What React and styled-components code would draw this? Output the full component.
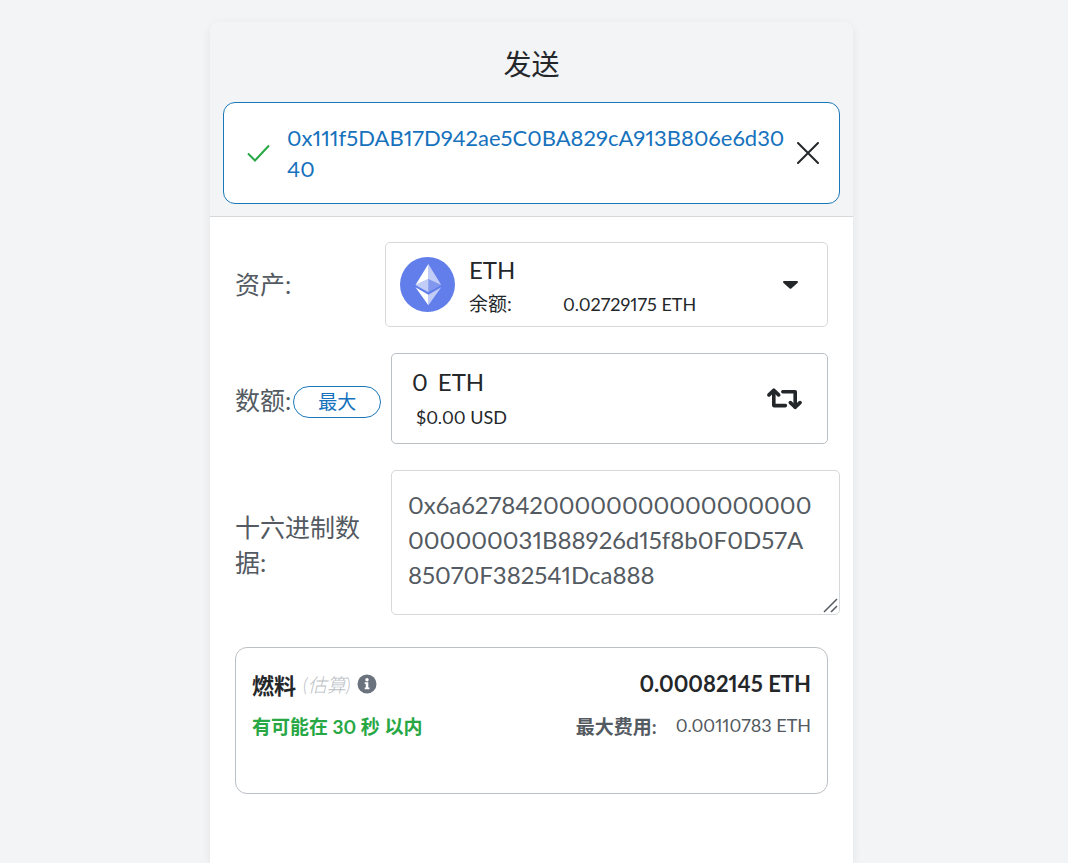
import { useState } from "react";
import styled, { createGlobalStyle } from "styled-components";

const GlobalStyle = createGlobalStyle`
  * {
    box-sizing: border-box;
  }
  body {
    margin: 0;
    background-color: #f2f4f6;
    color: #24272a;
    font-family: Lato, "Noto Sans CJK SC", sans-serif;
    font-variant-numeric: proportional-nums;
  }
  button, input, textarea {
    font-family: inherit;
    font-variant-numeric: inherit;
    color: inherit;
  }
`;

const Page = styled.div`
  display: flex;
  justify-content: center;
  min-height: 100vh;
  padding: 22px 5px 0 0;
`;

const Card = styled.main`
  width: 100%;
  max-width: 643px;
  background-color: #fff;
  border-radius: 10px 10px 0 0;
  box-shadow: 0 2px 10px rgba(0, 0, 0, 0.07);
`;

const Header = styled.header`
  padding: 22px 13px 12px;
  background-color: #f2f4f6;
  border-bottom: 1px solid #d6d9dc;
  border-radius: 10px 10px 0 0;
`;

const Title = styled.h1`
  margin: 0 0 18px;
  font-size: 28px;
  font-weight: 400;
  line-height: 40px;
  text-align: center;
`;

const Recipient = styled.div`
  display: flex;
  align-items: center;
  min-height: 102px;
  padding: 16px 20px 16px 23px;
  background-color: #fff;
  border: 1px solid #1b78b8;
  border-radius: 12px;
`;

const Address = styled.div`
  flex: 1;
  margin: 0 10px 0 17px;
  color: #1672bd;
  font-size: 22px;
  line-height: 31px;
  word-break: break-all;
`;

const IconButton = styled.button`
  display: flex;
  padding: 0;
  background: none;
  border: none;
  cursor: pointer;
`;

const Form = styled.form`
  display: flex;
  flex-direction: column;
  gap: 26px;
  padding: 25px;
`;

const Row = styled.div`
  display: grid;
  grid-template-columns: ${(props) => props.$label || "156px"} minmax(0, 1fr);
  align-items: center;
  margin-right: ${(props) => (props.$wide ? "-12px" : "0")};
`;

const LabelCell = styled.div`
  display: flex;
  align-items: flex-end;
  gap: 2px;
  padding-top: 4px;
  padding-right: ${(props) => (props.$padded ? "24px" : "0")};
`;

const Label = styled.label`
  color: #535a61;
  font-size: 25px;
  line-height: 35px;
`;

const MaxButton = styled.button`
  width: 88px;
  height: 32px;
  padding: 0;
  background: none;
  border: 1px solid #1b78b8;
  border-radius: 16px;
  color: #1672bd;
  font-size: 19px;
  line-height: 28px;
  cursor: pointer;
`;

const AssetButton = styled.button`
  display: flex;
  align-items: center;
  height: 85px;
  padding: 0 28px 0 14px;
  background-color: #fff;
  border: 1px solid #d6d9dc;
  border-radius: 5px;
  text-align: left;
  cursor: pointer;
`;

const AssetInfo = styled.span`
  flex: 1;
  padding-top: 4px;
  margin-left: 14px;
`;

const AssetName = styled.span`
  display: block;
  font-size: 24px;
  line-height: 34px;
`;

const Balance = styled.span`
  display: grid;
  grid-template-columns: 94px 1fr;
  font-size: 18px;
  line-height: 34px;
`;

const BalanceLabel = styled.span`
  font-size: 19px;
`;

const AmountBox = styled.div`
  display: flex;
  align-items: center;
  justify-content: space-between;
  height: 91px;
  padding: 0 25px 0 20px;
  border: 1px solid #bbc0c5;
  border-radius: 5px;
`;

const AmountLine = styled.div`
  display: flex;
  gap: 10px;
  font-size: 24px;
  line-height: 36px;
`;

const AmountInput = styled.input`
  field-sizing: content;
  height: 36px;
  padding: 0;
  border: none;
  outline: none;
  font-size: 24px;
  line-height: 36px;
`;

const Fiat = styled.div`
  padding-left: 4px;
  font-size: 18px;
  line-height: 34px;
`;

const HexField = styled.div`
  position: relative;
`;

const HexInput = styled.textarea`
  display: block;
  width: 100%;
  height: 145px;
  padding: 16px 25px 16px 16px;
  background-color: #fff;
  border: 1px solid #d6d9dc;
  border-radius: 5px;
  outline: none;
  color: #535a61;
  font-size: 24px;
  line-height: 35px;
  word-break: break-all;
  overflow: hidden;
  resize: vertical;

  &::-webkit-resizer {
    background: transparent;
  }
`;

const Grip = styled.svg`
  position: absolute;
  right: 2px;
  bottom: 2px;
  pointer-events: none;
`;

const FeeCard = styled.section`
  min-height: 147px;
  margin-top: 6px;
  padding: 18px 16px;
  border: 1px solid #bbc0c5;
  border-radius: 12px;
`;

const FeeRow = styled.div`
  display: flex;
  align-items: center;
  justify-content: space-between;
  height: ${(props) => (props.$small ? "48px" : "35px")};
  color: ${(props) => (props.$small ? "#535a61" : "#24272a")};
  font-size: ${(props) => (props.$small ? "18px" : "22px")};
`;

const FeeTitle = styled.div`
  display: flex;
  align-items: center;
  gap: 7px;
  font-weight: 700;
`;

const Estimate = styled.em`
  color: #bbc0c5;
  font-size: 19px;
  font-weight: 300;
`;

const Timing = styled.span`
  color: #28a745;
  font-size: 19px;
  font-weight: 700;
`;

const MaxFee = styled.span`
  display: flex;
  align-items: center;
  gap: 19px;
`;

const MaxFeeLabel = styled.strong`
  font-size: 19px;
`;

function CheckIcon() {
  return (
    <svg width="23" height="18" viewBox="0 0 23 18" fill="none" aria-hidden="true">
      <path d="M1 9.5 8 16.5 22 1.5" stroke="#28a745" strokeWidth="2" />
    </svg>
  );
}

function CloseIcon() {
  return (
    <svg width="22" height="22" viewBox="0 0 22 22" fill="none" aria-hidden="true">
      <path d="M1 1 21 21M21 1 1 21" stroke="#24272a" strokeWidth="2" strokeLinecap="round" />
    </svg>
  );
}

function EthIcon() {
  return (
    <svg width="55" height="55" viewBox="0 0 32 32" aria-hidden="true">
      <circle cx="16" cy="16" r="16" fill="#627eea" />
      <g fill="#fff">
        <path fillOpacity=".602" d="M16.5 4v8.87l7.5 3.35z" />
        <path d="M16.5 4 9 16.22l7.5-3.35z" />
        <path fillOpacity=".602" d="M16.5 21.97V28L24 17.62z" />
        <path d="M16.5 28v-6.03L9 17.62z" />
        <path fillOpacity=".2" d="m16.5 20.57 7.5-4.35-7.5-3.35z" />
        <path fillOpacity=".602" d="m9 16.22 7.5 4.35v-7.7z" />
      </g>
    </svg>
  );
}

function CaretIcon() {
  return (
    <svg width="17" height="10" viewBox="0 0 17 10" aria-hidden="true">
      <path d="M2 1h13a1 1 0 0 1 .7 1.7L9.3 8.5a1.2 1.2 0 0 1-1.6 0L1.3 2.7A1 1 0 0 1 2 1z" fill="#24272a" />
    </svg>
  );
}

function SwapIcon() {
  return (
    <svg width="35" height="22" viewBox="0 0 35 22" fill="none" aria-hidden="true">
      <g stroke="#24272a" strokeWidth="3.6" strokeLinecap="round" strokeLinejoin="round">
        <path d="M2 6.9 6.8 2.2 11.6 6.9" />
        <path d="M23.4 14.6 28.2 19.3 33 14.6" />
        <path d="M6.8 3V17.6H18.4" />
        <path d="M15.8 3.7H28.2V19" />
      </g>
    </svg>
  );
}

function InfoIcon() {
  return (
    <svg width="20" height="20" viewBox="0 0 20 20" aria-hidden="true">
      <circle cx="10" cy="10" r="9.5" fill="#6a737d" />
      <circle cx="10" cy="5.7" r="1.7" fill="#fff" />
      <path d="M7.7 8.3h3.6v5.2h1.1v1.7H7.7v-1.7h1.1V10H7.7z" fill="#fff" />
    </svg>
  );
}

function RecipientBox() {
  return (
    <Recipient>
      <CheckIcon />
      <Address>0x111f5DAB17D942ae5C0BA829cA913B806e6d3040</Address>
      <IconButton type="button" aria-label="清除">
        <CloseIcon />
      </IconButton>
    </Recipient>
  );
}

function AssetRow() {
  return (
    <Row $label="150px">
      <Label htmlFor="asset">资产:</Label>
      <AssetButton type="button" id="asset" aria-haspopup="listbox">
        <EthIcon />
        <AssetInfo>
          <AssetName>ETH</AssetName>
          <Balance>
            <BalanceLabel>余额:</BalanceLabel>
            <span>0.02729175 ETH</span>
          </Balance>
        </AssetInfo>
        <CaretIcon />
      </AssetButton>
    </Row>
  );
}

function AmountRow() {
  const [amount, setAmount] = useState("0");

  return (
    <Row>
      <LabelCell>
        <Label htmlFor="amount">数额:</Label>
        <MaxButton type="button">最大</MaxButton>
      </LabelCell>
      <AmountBox>
        <div>
          <AmountLine>
            <AmountInput
              id="amount"
              value={amount}
              onChange={(e) => setAmount(e.target.value)}
            />
            <span>ETH</span>
          </AmountLine>
          <Fiat>$0.00 USD</Fiat>
        </div>
        <IconButton type="button" aria-label="切换货币">
          <SwapIcon />
        </IconButton>
      </AmountBox>
    </Row>
  );
}

function HexRow() {
  return (
    <Row $wide>
      <LabelCell $padded>
        <Label htmlFor="hex">十六进制数据:</Label>
      </LabelCell>
      <HexField>
        <HexInput
          id="hex"
          spellCheck="false"
          defaultValue="0x6a62784200000000000000000000000031B88926d15f8b0F0D57A85070F382541Dca888"
        />
        <Grip width="15" height="15" viewBox="0 0 15 15" fill="none" aria-hidden="true">
          <path d="M1 14 14 1M8 14l6-6" stroke="#535a61" strokeWidth="1.5" />
        </Grip>
      </HexField>
    </Row>
  );
}

function GasFee() {
  return (
    <FeeCard>
      <FeeRow>
        <FeeTitle>
          燃料
          <Estimate>(估算)</Estimate>
          <InfoIcon />
        </FeeTitle>
        <strong>0.00082145 ETH</strong>
      </FeeRow>
      <FeeRow $small>
        <Timing>有可能在 30 秒 以内</Timing>
        <MaxFee>
          <MaxFeeLabel>最大费用:</MaxFeeLabel>
          <span>0.00110783 ETH</span>
        </MaxFee>
      </FeeRow>
    </FeeCard>
  );
}

function App() {
  return (
    <>
      <GlobalStyle />
      <Page>
        <Card>
          <Header>
            <Title>发送</Title>
            <RecipientBox />
          </Header>
          <Form>
            <AssetRow />
            <AmountRow />
            <HexRow />
            <GasFee />
          </Form>
        </Card>
      </Page>
    </>
  );
}

export default App;
